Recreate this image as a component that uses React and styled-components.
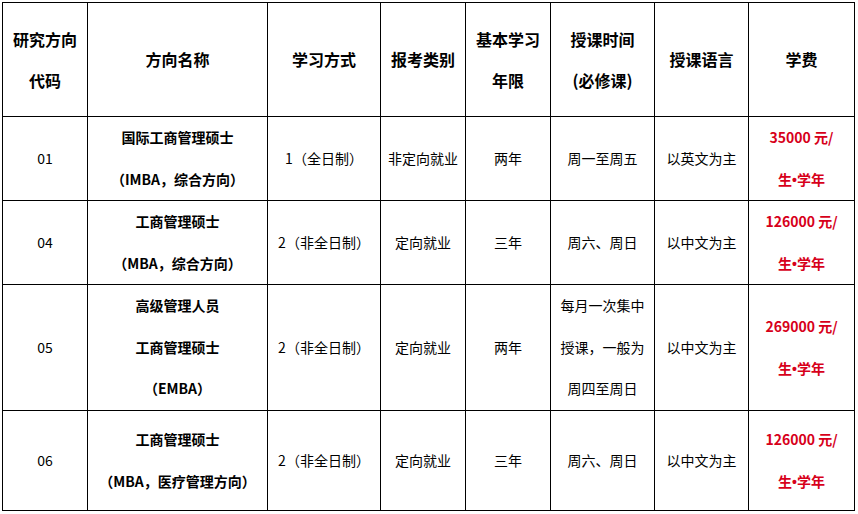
import React from 'react';
import styled, { createGlobalStyle } from 'styled-components';

const GlobalStyle = createGlobalStyle`
  html, body {
    margin: 0;
    padding: 0;
    background: #fff;
  }
  body {
    font-family: "Microsoft YaHei", "Noto Sans CJK SC", "Noto Sans", sans-serif;
    color: #000;
  }
`;

const columns = [85, 180, 113, 85, 85, 104, 94, 106];

const headers = [
  ['研究方向', '代码'],
  ['方向名称'],
  ['学习方式'],
  ['报考类别'],
  ['基本学习', '年限'],
  ['授课时间', '(必修课)'],
  ['授课语言'],
  ['学费'],
];

const rows = [
  {
    height: 83,
    code: '01',
    name: ['国际工商管理硕士', '（IMBA，综合方向）'],
    mode: '1（全日制）',
    type: '非定向就业',
    years: '两年',
    time: ['周一至周五'],
    lang: '以英文为主',
    fee: '35000 元/',
  },
  {
    height: 84,
    code: '04',
    name: ['工商管理硕士', '（MBA，综合方向）'],
    mode: '2（非全日制）',
    type: '定向就业',
    years: '三年',
    time: ['周六、周日'],
    lang: '以中文为主',
    fee: '126000 元/',
  },
  {
    height: 126,
    code: '05',
    name: ['高级管理人员', '工商管理硕士', '（EMBA）'],
    mode: '2（非全日制）',
    type: '定向就业',
    years: '两年',
    time: ['每月一次集中', '授课，一般为', '周四至周日'],
    lang: '以中文为主',
    fee: '269000 元/',
  },
  {
    height: 100,
    code: '06',
    name: ['工商管理硕士', '（MBA，医疗管理方向）'],
    mode: '2（非全日制）',
    type: '定向就业',
    years: '三年',
    time: ['周六、周日'],
    lang: '以中文为主',
    fee: '126000 元/',
  },
];

const Page = styled.div`
  padding: 2px 0 0 2px;
`;

const Table = styled.table`
  border-collapse: collapse;
  table-layout: fixed;
  width: 852px;
`;

const HeadCell = styled.th`
  border: 1px solid #000;
  height: 113px;
  padding: 0 2px;
  font-size: 16px;
  font-weight: 700;
  line-height: 41px;
  text-align: center;
  vertical-align: middle;
`;

const Cell = styled.td`
  border: 1px solid #000;
  padding: 0 2px;
  font-size: 14px;
  font-weight: ${({ $bold }) => ($bold ? 700 : 400)};
  color: ${({ $red }) => ($red ? '#d7001a' : '#000')};
  line-height: 41.5px;
  text-align: center;
  vertical-align: middle;
  white-space: nowrap;
`;

const Line = styled.div``;

const Dot = styled.span`
  font-family: "Liberation Sans", Arial, sans-serif;
  line-height: 1;
`;

function Lines({ items }) {
  return items.map((t) => <Line key={t}>{t}</Line>);
}

export default function App() {
  return (
    <Page>
      <GlobalStyle />
      <Table>
        <colgroup>
          {columns.map((w, i) => (
            <col key={i} style={{ width: w }} />
          ))}
        </colgroup>
        <thead>
          <tr>
            {headers.map((h, i) => (
              <HeadCell key={i}>
                <Lines items={h} />
              </HeadCell>
            ))}
          </tr>
        </thead>
        <tbody>
          {rows.map((r) => (
            <tr key={r.code} style={{ height: r.height }}>
              <Cell>{r.code}</Cell>
              <Cell $bold>
                <Lines items={r.name} />
              </Cell>
              <Cell>{r.mode}</Cell>
              <Cell>{r.type}</Cell>
              <Cell>{r.years}</Cell>
              <Cell>
                <Lines items={r.time} />
              </Cell>
              <Cell>{r.lang}</Cell>
              <Cell $bold $red>
                <Line>{r.fee}</Line>
                <Line>
                  生<Dot>•</Dot>学年
                </Line>
              </Cell>
            </tr>
          ))}
        </tbody>
      </Table>
    </Page>
  );
}
